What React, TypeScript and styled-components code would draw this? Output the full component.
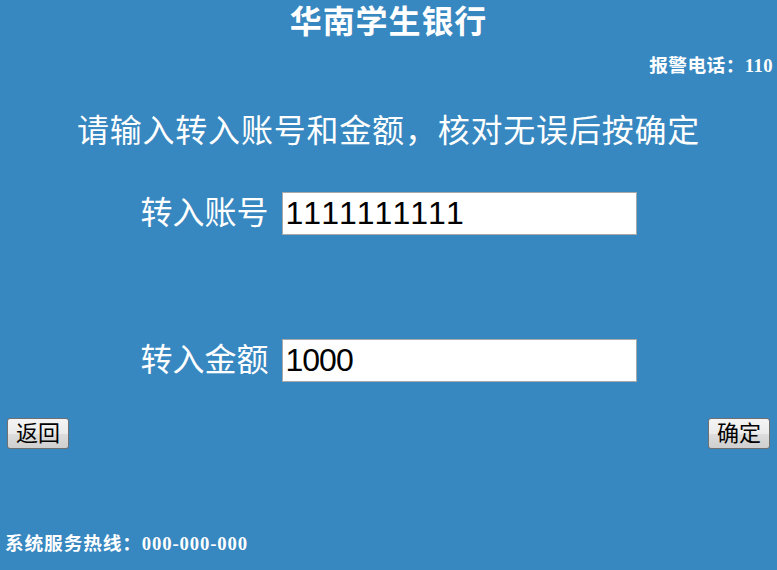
import React from "react";
import styled, { createGlobalStyle } from "styled-components";

const Global = createGlobalStyle`
  html, body {
    margin: 0;
    padding: 0;
    background: #3787c0;
  }
  body {
    font-family: "Liberation Serif", "Noto Sans CJK SC", serif;
  }
`;

const Page = styled.div`
  width: 777px;
  height: 570px;
  background: #3787c0;
  color: #ffffff;
  display: flex;
  flex-direction: column;
  overflow: hidden;
`;

const Title = styled.h1`
  margin: 0;
  font-size: 32px;
  line-height: 44px;
  font-weight: 700;
  letter-spacing: 0.9px;
  text-align: center;
`;

const Hint = styled.h3<{ $align: "left" | "right" }>`
  margin: ${(p) => (p.$align === "right" ? "10px 4px 0 0" : "83px 0 0 5px")};
  font-size: 18.72px;
  line-height: 24px;
  font-weight: 700;
  letter-spacing: ${(p) => (p.$align === "right" ? "0.4px" : "0.85px")};
  text-align: ${(p) => p.$align};
`;

const Instruction = styled.h2`
  margin: 31px 0 0;
  font-size: 32px;
  line-height: 44px;
  font-weight: 400;
  letter-spacing: 0.8px;
  text-align: center;
`;

const FieldRow = styled.div<{ $top: number }>`
  margin-top: ${(p) => p.$top}px;
  display: flex;
  justify-content: center;
  align-items: center;
  gap: 13px;
  height: 43px;
`;

const Label = styled.label`
  font-size: 32px;
  line-height: 43px;
  font-weight: 400;
  white-space: nowrap;
`;

const Field = styled.input<{ $spacing: number }>`
  box-sizing: border-box;
  width: 355px;
  height: 43px;
  padding: 0 3px;
  border: 1px solid #a9a9a9;
  background: #ffffff;
  color: #000000;
  font-family: "Liberation Sans", Arial, sans-serif;
  font-size: 32px;
  letter-spacing: ${(p) => p.$spacing}px;
  outline: none;
`;

const ButtonBar = styled.div`
  margin-top: 36px;
  display: flex;
  justify-content: space-between;
  padding: 0 7px;
`;

const Button = styled.button`
  box-sizing: border-box;
  width: 62px;
  height: 31px;
  padding: 0;
  border: 1px solid #707070;
  border-radius: 3px;
  background: linear-gradient(#f4f4f4 0%, #ebebeb 50%, #dddddd 51%, #cfcfcf 100%);
  color: #000000;
  font-family: "Liberation Serif", "Noto Sans CJK SC", serif;
  font-size: 22px;
  line-height: 29px;
  cursor: pointer;
`;

export default function App() {
  return (
    <>
      <Global />
      <Page>
        <Title>华南学生银行</Title>
        <Hint $align="right">报警电话：110</Hint>
        <Instruction>请输入转入账号和金额，核对无误后按确定</Instruction>
        <FieldRow $top={39}>
          <Label>转入账号</Label>
          <Field type="text" $spacing={2.4} defaultValue="1111111111" />
        </FieldRow>
        <FieldRow $top={104}>
          <Label>转入金额</Label>
          <Field type="text" $spacing={-1} defaultValue="1000" />
        </FieldRow>
        <ButtonBar>
          <Button>返回</Button>
          <Button>确定</Button>
        </ButtonBar>
        <Hint $align="left">系统服务热线：000-000-000</Hint>
      </Page>
    </>
  );
}
